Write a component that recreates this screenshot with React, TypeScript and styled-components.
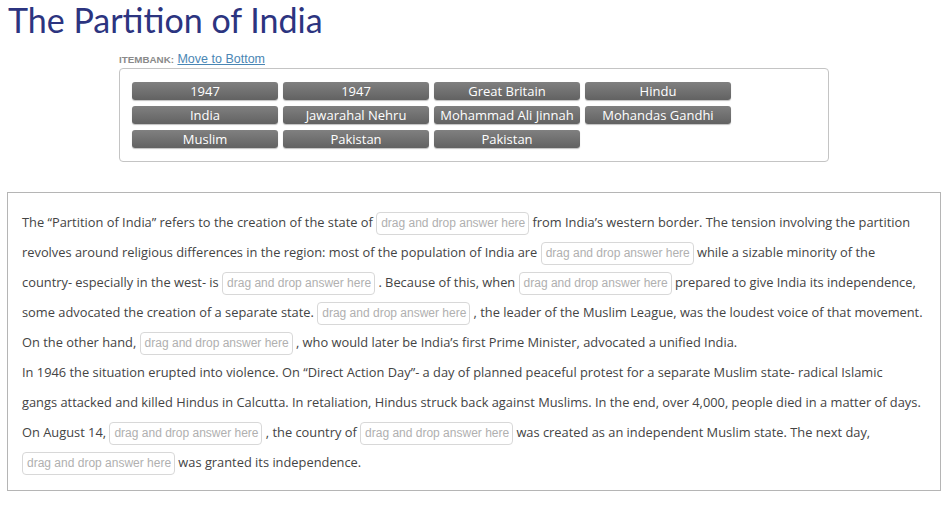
import React from "react";
import styled, { createGlobalStyle } from "styled-components";

const GlobalStyle = createGlobalStyle`
  body {
    margin: 0;
    background: #ffffff;
    font-family: "Open Sans", "Noto Sans", sans-serif;
  }
`;

const bankItems = [
  "1947",
  "1947",
  "Great Britain",
  "Hindu",
  "India",
  "Jawarahal Nehru",
  "Mohammad Ali Jinnah",
  "Mohandas Gandhi",
  "Muslim",
  "Pakistan",
  "Pakistan",
];

const Drop = () => <DropZone>drag and drop answer here</DropZone>;

const App = () => {
  return (
    <Page>
      <GlobalStyle />
      <Title>The Partition of India</Title>
      <Bank>
        <BankLabel>
          <strong>ITEMBANK:</strong> <BankLink href="#">Move to Bottom</BankLink>
        </BankLabel>
        <BankBox>
          {bankItems.map((item, i) => (
            <Chip key={i}>{item}</Chip>
          ))}
        </BankBox>
      </Bank>
      <Passage>
        <Para>
          The “Partition of India” refers to the creation of the state of <Drop /> from India’s
          western border. The tension involving the partition revolves around religious
          differences in the region: most of the population of India are <Drop /> while a sizable
          minority of the country- especially in the west- is <Drop /> . Because of this, when{" "}
          <Drop /> prepared to give India its independence, some advocated the creation of a
          separate state. <Drop /> , the leader of the Muslim League, was the loudest voice of that
          movement. On the other hand, <Drop /> , who would later be India’s first Prime Minister,
          advocated a unified India.
        </Para>
        <Para>
          In 1946 the situation erupted into violence. On “Direct Action Day”- a day of planned
          peaceful protest for a separate Muslim state- radical Islamic
          <br />
          gangs attacked and killed Hindus in Calcutta. In retaliation, Hindus struck back against
          Muslims. In the end, over 4,000, people died in a matter of days. On August 14, <Drop /> ,
          the country of <Drop /> was created as an independent Muslim state. The next day,{" "}
          <Drop /> was granted its independence.
        </Para>
      </Passage>
    </Page>
  );
};

export default App;

const Page = styled.div`
  padding: 0 2px 0 7px;
`;

const Title = styled.h1`
  margin: 0;
  padding: 2px 0 0 1px;
  height: 42px;
  font-family: "Lato", sans-serif;
  font-weight: 400;
  font-size: 34px;
  line-height: 36px;
  color: #2c3480;
`;

const Bank = styled.div`
  margin: 7px 0 0 112px;
  width: 710px;
`;

const BankLabel = styled.div`
  font-family: "Liberation Sans", Arial, sans-serif;
  font-size: 12.5px;
  line-height: 16px;
  color: #888;

  strong {
    font-size: 9.8px;
    font-weight: bold;
    color: #8a8a8a;
  }
`;

const BankLink = styled.a`
  color: #4a86b4;
  text-decoration: underline;
`;

const BankBox = styled.div`
  display: grid;
  grid-template-columns: repeat(4, 146px);
  column-gap: 5px;
  row-gap: 6px;
  padding: 13px 12px 13px;
  border: 1px solid #c4c4c4;
  border-radius: 4px;
`;

const Chip = styled.div`
  height: 18px;
  line-height: 18px;
  text-align: center;
  color: #fff;
  font-size: 13px;
  border-radius: 3px;
  background: linear-gradient(#808080, #626262);
  box-shadow: 0 1px 1px rgba(0, 0, 0, 0.25);
`;

const Passage = styled.div`
  margin-top: 30px;
  width: 906px;
  padding: 14px 12px 13px 14px;
  border: 1px solid #b5b5b5;
  color: #444;
  font-size: 12.85px;
  line-height: 30px;
`;

const Para = styled.div``;

const DropZone = styled.span`
  display: inline-block;
  box-sizing: border-box;
  width: 153px;
  height: 23px;
  line-height: 20px;
  padding: 0 4px;
  vertical-align: middle;
  text-align: center;
  font-family: "Liberation Sans", Arial, sans-serif;
  font-size: 12px;
  color: #b0b0b0;
  border: 1px solid #d8d8d8;
  border-radius: 4px;
  white-space: nowrap;
`;
